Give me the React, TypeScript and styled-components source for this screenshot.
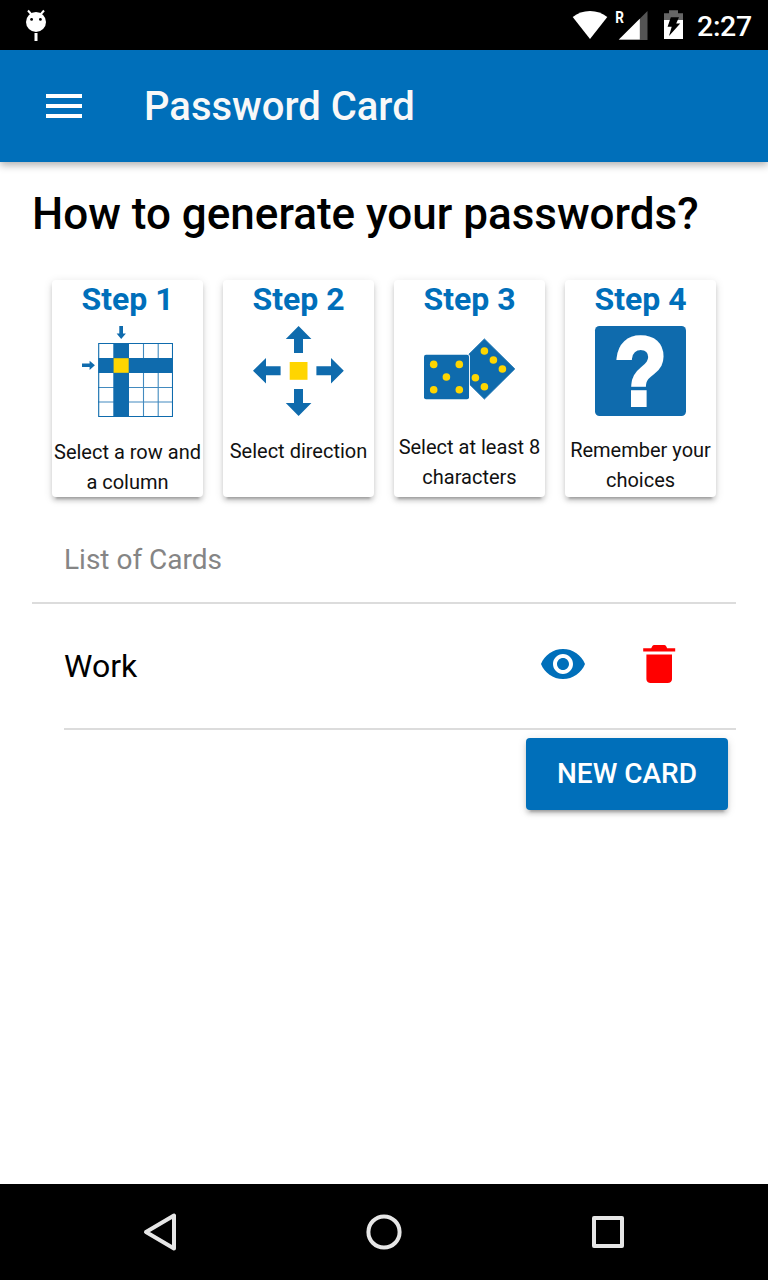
import React from "react";
import styled, { createGlobalStyle } from "styled-components";

const BLUE = "#006fba";
const ART = "#0f6bad";
const YELLOW = "#ffd500";

const GlobalStyle = createGlobalStyle`
  *, *::before, *::after { box-sizing: border-box; }
  body { margin: 0; background: #fff; font-family: Roboto, "Noto Sans", sans-serif; }
  h1, h2, p { margin: 0; }
  svg { display: block; flex: none; }
`;

const Screen = styled.div`
  display: flex;
  flex-direction: column;
  width: 768px;
  height: 1280px;
  overflow: hidden;
  background: #fff;
  color: #000;
`;

const StatusBar = styled.div`
  display: flex;
  justify-content: space-between;
  flex: none;
  height: 50px;
  padding: 0 16px 0 20px;
  background: #000;
  color: #fff;
`;

const StatusGroup = styled.div`
  display: flex;
`;

const Clock = styled.span`
  width: 55px;
  margin-left: 11px;
  font-size: 28.5px;
  font-weight: 500;
  line-height: 53px;
  letter-spacing: -0.3px;
  white-space: nowrap;
`;

const AppBar = styled.header`
  display: flex;
  align-items: center;
  flex: none;
  height: 112px;
  padding-left: 46px;
  gap: 62px;
  background: ${BLUE};
  box-shadow: 0 3px 8px rgba(0, 0, 0, 0.32);
`;

const Title = styled.h1`
  padding-top: 2px;
  color: #f8f8f8;
  font-size: 40px;
  font-weight: 500;
  line-height: 48px;
`;

const Content = styled.main`
  flex: 1;
  padding: 24px 32px 0;
`;

const Heading = styled.h2`
  font-size: 44px;
  font-weight: 500;
  line-height: 56px;
`;

const Steps = styled.section`
  display: grid;
  grid-template-columns: repeat(4, 151px);
  gap: 20px;
  padding: 38px 20px 0;
`;

const StepCard = styled.article`
  display: flex;
  flex-direction: column;
  align-items: center;
  height: 217px;
  border-radius: 4px;
  background: #fff;
  box-shadow: 0 6px 2px -4px rgba(0, 0, 0, 0.2), 0 4px 4px rgba(0, 0, 0, 0.14),
    0 2px 10px rgba(0, 0, 0, 0.12);
`;

const StepTitle = styled.p`
  color: ${BLUE};
  font-size: 32px;
  font-weight: 700;
  line-height: 38px;
  margin-bottom: 8px;
`;

const StepCaption = styled.p<{ $gap: number }>`
  margin-top: ${(p) => p.$gap}px;
  color: #111;
  font-size: 20px;
  line-height: 30px;
  text-align: center;
  white-space: pre-line;
`;

const ListHeader = styled.div`
  height: 107px;
  padding: 43px 32px 0;
  border-bottom: 2px solid #dcdcdc;
  color: #858585;
  font-size: 28px;
  line-height: 40px;
`;

const CardRow = styled.div`
  display: flex;
  align-items: flex-start;
  height: 126px;
  margin-left: 32px;
  padding-right: 51px;
  border-bottom: 2px solid #dcdcdc;
`;

const CardName = styled.span`
  flex: 1;
  margin-top: 42px;
  font-size: 32px;
  line-height: 40px;
`;

const RowIcon = styled.span<{ $top: number; $left?: number }>`
  margin-top: ${(p) => p.$top}px;
  margin-left: ${(p) => p.$left ?? 0}px;
`;

const Actions = styled.div`
  display: flex;
  justify-content: flex-end;
  padding: 8px 8px 0;
`;

const NewCardButton = styled.button`
  width: 202px;
  height: 72px;
  padding: 0;
  border: 0;
  border-radius: 4px;
  background: ${BLUE};
  color: #fff;
  font: 500 28px/72px Roboto, sans-serif;
  box-shadow: 0 6px 2px -4px rgba(0, 0, 0, 0.2), 0 4px 4px rgba(0, 0, 0, 0.14),
    0 2px 10px rgba(0, 0, 0, 0.12);
`;

const NavBar = styled.nav`
  display: flex;
  align-items: center;
  justify-content: space-between;
  flex: none;
  height: 96px;
  padding: 0 136px;
  background: #000;
`;

const OverflowSvg = styled.svg`
  overflow: visible;
`;

const DebugIcon = () => (
  <svg width="32" height="50" viewBox="20 0 32 50">
    <g stroke="#fff" strokeWidth="2">
      <path d="M28 10.5l3.5 4M44 10.5l-3.5 4" />
      <path d="M36 33v8" strokeWidth="3" />
    </g>
    <circle cx="36" cy="22" r="10" fill="#fff" />
    <circle cx="31.6" cy="19.4" r="1.4" />
    <circle cx="40.4" cy="19.4" r="1.4" />
  </svg>
);

const WifiIcon = () => (
  <svg width="36" height="50" viewBox="572 0 36 50">
    <path fill="#fff" d="M590 39L572.7 17Q580 11 590 11t17.3 6z" />
  </svg>
);

const SignalIcon = () => (
  <svg width="46" height="50" viewBox="608 0 46 50">
    <path fill="#545454" d="M647.5 11v29H618.5z" />
    <path fill="#fff" d="M639.8 18.7V39.6H618.9z" />
    <text transform="translate(615.3 23.4) scale(.82 1)" fill="#fff" fontFamily="Roboto" fontWeight="700" fontSize="16.5">R</text>
  </svg>
);

const BatteryIcon = () => (
  <svg width="32" height="50" viewBox="654 0 32 50">
    <path fill="#666" d="M664 20v-6.7h5V10.3h9v3h5V20z" />
    <path fill="#fff" d="M664 20h19v19h-19z" />
    <path d="M670.8 17.3h8.2l-2.8 6.2h4L669 36l2.7-9.3H667.6z" />
  </svg>
);

const MenuIcon = () => (
  <svg width="36" height="24" viewBox="0 0 36 24">
    <path fill="#fff" d="M0 0h36v4H0zM0 10h36v4H0zM0 20h36v4H0z" />
  </svg>
);

const GridArt = () => (
  <svg width="91" height="91" viewBox="0 0 91 91">
    <g fill="none" stroke="#428abf" strokeWidth="1.1">
      <path d="M61.5 17v74M76.2 17v74M16 61.5h75M16 76h75" />
      <path stroke={ART} d="M16.7 17.5h73.8v73H16.7z" />
    </g>
    <path fill={ART} d="M31.3 17H47v74H31.3zM16.3 32H91v15H16.3z" />
    <path fill={YELLOW} d="M31.6 32.2h15.1v14.6H31.6z" />
    <path fill={ART} d="M37.3 0H41v7.5h2.9L39.2 12.9 34.6 7.5h2.7zM0 37.6V41h7.6v2.9L12.9 39.3 7.6 34.7v2.9z" />
  </svg>
);

const DirectionArt = () => (
  <svg width="91" height="91" viewBox="0 0 91 91">
    <g fill={ART}>
      <path d="M45.6 0L58.4 13H50v14h-9V13h-8.2z" />
      <path d="M45.6 90L58.4 77H50V63h-9v14h-8.2z" />
      <path d="M0 44.8L13 32v8.3h14.6v9H13v8.2z" />
      <path d="M90.8 44.8L78 32v8.3H63.4v9H78v8.2z" />
    </g>
    <path fill={YELLOW} d="M36.7 36h17.8v17.8H36.7z" />
  </svg>
);

const leftPips = [[9.7, 38.4], [35.3, 38.4], [22.4, 51], [9.7, 63.7], [35.3, 63.7]];
const rightPips = [[60.4, 25], [69.4, 34], [78.4, 43], [51.4, 51.8], [60.4, 60.8]];

const DiceArt = () => (
  <svg width="91" height="86" viewBox="0 0 91 86">
    <path fill={ART} d="M60.4 12.9L90.8 42.9 60.4 73.1 30 42.9z" stroke={ART} strokeWidth=".8" strokeLinejoin="round" />
    <rect x="-1" y="28" width="46.9" height="46.3" rx="2.5" fill="#fff" />
    <rect y="28.8" width="45" height="44.4" rx="2" fill={ART} />
    {[...leftPips, ...rightPips].map(([x, y]) => (
      <circle key={`${x}-${y}`} cx={x} cy={y} r="3.8" fill={YELLOW} />
    ))}
  </svg>
);

const QuestionArt = () => (
  <OverflowSvg width="91" height="90" viewBox="0 0 91 90">
    <rect width="91" height="90" rx="4.5" fill={ART} />
    <text
      transform="translate(45.6 79.1) scale(.88 1)"
      textAnchor="middle"
      fill="#fff"
      stroke="#fff"
      strokeWidth="4"
      fontFamily="Liberation Sans"
      fontWeight="700"
      fontSize="97"
    >
      ?
    </text>
  </OverflowSvg>
);

const EyeIcon = () => (
  <svg width="48" height="48" viewBox="0 0 24 24" fill={BLUE}>
    <path d="M12 4.5C7 4.5 2.73 7.61 1 12c1.73 4.39 6 7.5 11 7.5s9.27-3.11 11-7.5c-1.73-4.39-6-7.5-11-7.5zM12 17c-2.76 0-5-2.24-5-5s2.24-5 5-5 5 2.24 5 5-2.24 5-5 5zm0-8c-1.66 0-3 1.34-3 3s1.34 3 3 3 3-1.34 3-3-1.34-3-3-3z" />
  </svg>
);

const TrashIcon = () => (
  <svg width="52" height="52" viewBox="-6 4 520 520" fill="#f00">
    <path d="M128 405.4c0 23.4 19.2 38.6 42.7 38.6h170.6c23.5 0 42.7-15.2 42.7-38.6V160H128zM416 96h-80l-12-22q-6-10-17-10H205q-11 0-17 10l-12 22H96v32h320z" />
  </svg>
);

const NavIcon = ({ children }: { children: React.ReactNode }) => (
  <svg width="48" height="48" viewBox="0 0 48 48" fill="none" stroke="#e6e6e6" strokeWidth="4" strokeLinejoin="round">
    {children}
  </svg>
);

const steps = [
  { title: "Step 1", caption: "Select a row and\na column", art: <GridArt />, gap: 20 },
  { title: "Step 2", caption: "Select direction", art: <DirectionArt />, gap: 19 },
  { title: "Step 3", caption: "Select at least 8\ncharacters", art: <DiceArt />, gap: 20 },
  { title: "Step 4", caption: "Remember your\nchoices", art: <QuestionArt />, gap: 19 },
];

export default function App() {
  return (
    <Screen>
      <GlobalStyle />
      <StatusBar>
        <DebugIcon />
        <StatusGroup>
          <WifiIcon />
          <SignalIcon />
          <BatteryIcon />
          <Clock>2:27</Clock>
        </StatusGroup>
      </StatusBar>
      <AppBar>
        <MenuIcon />
        <Title>Password Card</Title>
      </AppBar>
      <Content>
        <Heading>How to generate your passwords?</Heading>
        <Steps>
          {steps.map((s) => (
            <StepCard key={s.title}>
              <StepTitle>{s.title}</StepTitle>
              {s.art}
              <StepCaption $gap={s.gap}>{s.caption}</StepCaption>
            </StepCard>
          ))}
        </Steps>
        <ListHeader>List of Cards</ListHeader>
        <CardRow>
          <CardName>Work</CardName>
          <RowIcon $top={36}><EyeIcon /></RowIcon>
          <RowIcon $top={35} $left={46}><TrashIcon /></RowIcon>
        </CardRow>
        <Actions>
          <NewCardButton>NEW CARD</NewCardButton>
        </Actions>
      </Content>
      <NavBar>
        <NavIcon><path d="M10 24L38 7.5v33z" /></NavIcon>
        <NavIcon><circle cx="24" cy="24" r="15.6" /></NavIcon>
        <NavIcon><rect x="10" y="10" width="28" height="28" /></NavIcon>
      </NavBar>
    </Screen>
  );
}
